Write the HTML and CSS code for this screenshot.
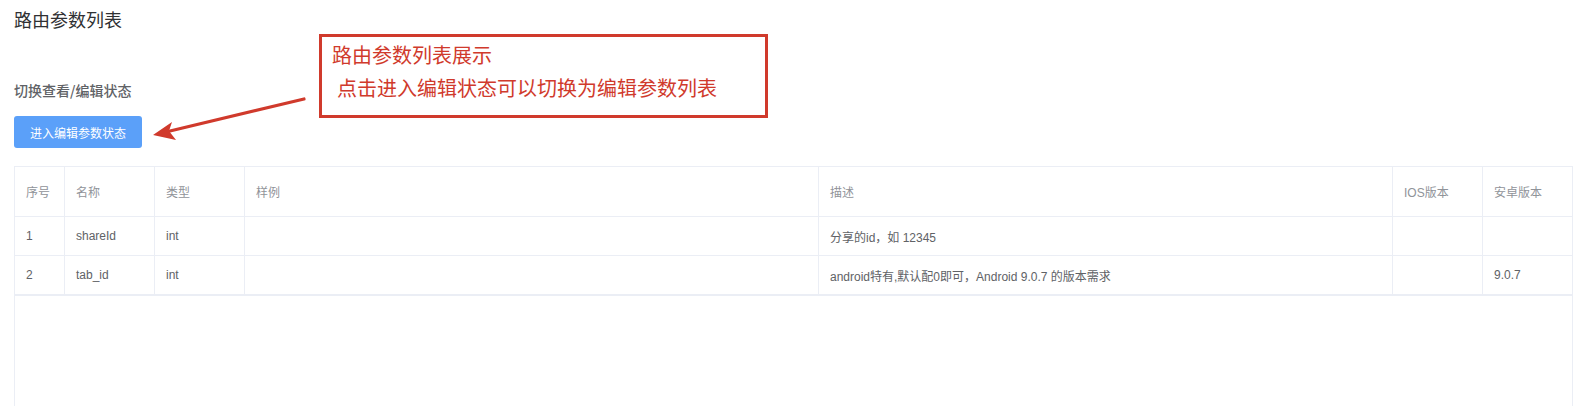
FILE: index.html
```html
<!DOCTYPE html>
<html lang="zh">
<head>
<meta charset="utf-8">
<title>路由参数列表</title>
<link rel="stylesheet" href="styles.css">
</head>
<body>
<div class="page">
  <h1 class="title">路由参数列表</h1>
  <div class="subtitle">切换查看/编辑状态</div>
  <button class="btn">进入编辑参数状态</button>
  <div class="table">
    <div class="row head">
      <div class="cell">序号</div>
      <div class="cell">名称</div>
      <div class="cell">类型</div>
      <div class="cell">样例</div>
      <div class="cell">描述</div>
      <div class="cell">IOS版本</div>
      <div class="cell">安卓版本</div>
    </div>
    <div class="row">
      <div class="cell">1</div>
      <div class="cell">shareId</div>
      <div class="cell">int</div>
      <div class="cell"></div>
      <div class="cell">分享的id，如 12345</div>
      <div class="cell"></div>
      <div class="cell"></div>
    </div>
    <div class="row last">
      <div class="cell">2</div>
      <div class="cell">tab_id</div>
      <div class="cell">int</div>
      <div class="cell"></div>
      <div class="cell">android特有,默认配0即可，Android 9.0.7 的版本需求</div>
      <div class="cell"></div>
      <div class="cell">9.0.7</div>
    </div>
  </div>

  <div class="note">
    <div>路由参数列表展示</div>
    <div class="note-indent">点击进入编辑状态可以切换为编辑参数列表</div>
  </div>
  <svg class="arrow" width="1578" height="406" viewBox="0 0 1578 406">
    <line x1="304" y1="99" x2="170" y2="131" stroke="#d03a2c" stroke-width="3.2" stroke-linecap="round"/>
    <polygon points="153,135 172,122 169,131 176,140" fill="#d03a2c"/>
  </svg>
</div>
</body>
</html>
```
FILE: styles.css
```css
html, body {
  margin: 0;
  padding: 0;
  overflow: hidden;
  background: #fff;
}
body {
  font-family: "Liberation Sans", "Noto Sans CJK SC", sans-serif;
}
.page {
  position: relative;
  padding: 8px 6px 0 14px;
  height: 406px;
  box-sizing: border-box;
}
.title {
  margin: 0;
  font-size: 18px;
  line-height: 26px;
  font-weight: 400;
  color: #303133;
}
.subtitle {
  margin-top: 46px;
  font-family: "Noto Sans CJK SC", sans-serif;
  font-size: 14px;
  line-height: 20px;
  font-weight: 500;
  color: #606266;
}
.btn {
  display: block;
  margin-top: 16px;
  width: 128px;
  height: 32px;
  border: none;
  border-radius: 3px;
  background: #5ba0f9;
  color: #fff;
  font-family: "Noto Sans CJK SC", sans-serif;
  font-size: 12px;
  padding: 0;
}
.table {
  margin-top: 18px;
  width: 1559px;
  height: 260px;
  box-sizing: border-box;
  border: 1px solid #ebeef5;
  border-bottom: none;
  font-size: 12px;
  color: #606266;
}
.row {
  display: grid;
  grid-template-columns: 50px 90px 90px 574px 574px 90px 1fr;
  height: 39px;
  border-bottom: 1px solid #ebeef5;
  box-sizing: border-box;
}
.row.head {
  height: 50px;
  color: #909399;
}
.row.last {
  height: 40px;
  border-bottom: 2px solid #ebeef5;
}
.cell {
  display: flex;
  align-items: center;
  padding-left: 11px;
  border-right: 1px solid #ebeef5;
  white-space: nowrap;
}
.cell:last-child {
  border-right: none;
}
.note {
  position: absolute;
  left: 319px;
  top: 34px;
  width: 449px;
  height: 84px;
  box-sizing: border-box;
  border: 3px solid #d03a2c;
  padding: 1px 0 0 10px;
  color: #d03a2c;
  font-family: "Noto Sans CJK SC", sans-serif;
  font-size: 20px;
  line-height: 34px;
}
.note-indent {
  margin-left: 5px;
  margin-top: -1px;
}
.arrow {
  position: absolute;
  left: 0;
  top: 0;
  pointer-events: none;
}
```
